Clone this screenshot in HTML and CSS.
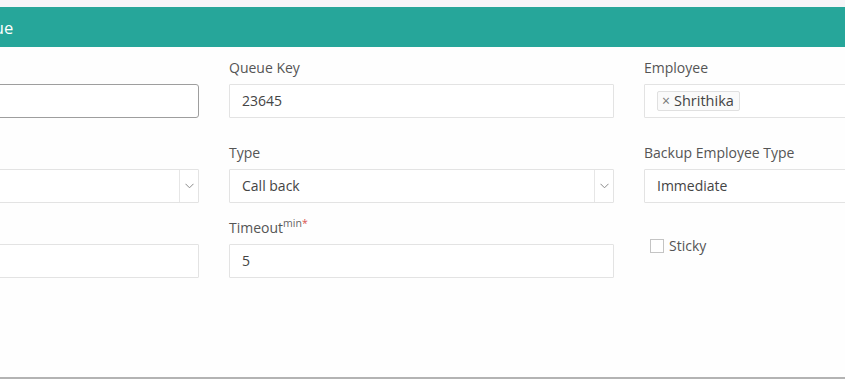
FILE: index.html
```html
<!DOCTYPE html>
<html lang="en">
<head>
    <meta charset="UTF-8">
    <meta name="viewport" content="width=device-width, initial-scale=1.0">
    <title>Edit Queue</title>
    <link rel="stylesheet" href="styles.css">
</head>
<body>
    <div class="modal">
        <div class="modal-header">
            <h2 class="modal-title">Edit Queue</h2>
        </div>

        <div class="modal-body">
            <div class="form-grid">
                <!-- row 1 -->
                <div class="field field-first">
                    <label>Queue Name</label>
                    <div class="input input-active"></div>
                </div>
                <div class="field field-first">
                    <label>Queue Key</label>
                    <div class="input">23645</div>
                </div>
                <div class="field field-first">
                    <label>Employee</label>
                    <div class="input input-tags">
                        <span class="tag"><span class="tag-x">&times;</span>Shrithika</span>
                    </div>
                </div>

                <!-- row 2 -->
                <div class="field">
                    <label>Queue Group</label>
                    <div class="input select">
                        <span class="select-value"></span>
                        <span class="select-arrow">
                            <svg width="9" height="6" viewBox="0 0 9 6"><polyline points="0.5,0.8 4.5,4.8 8.5,0.8" fill="none" stroke="#8a8a8a" stroke-width="1"/></svg>
                        </span>
                    </div>
                </div>
                <div class="field">
                    <label>Type</label>
                    <div class="input select">
                        <span class="select-value">Call back</span>
                        <span class="select-arrow">
                            <svg width="9" height="6" viewBox="0 0 9 6"><polyline points="0.5,0.8 4.5,4.8 8.5,0.8" fill="none" stroke="#8a8a8a" stroke-width="1"/></svg>
                        </span>
                    </div>
                </div>
                <div class="field">
                    <label>Backup Employee Type</label>
                    <div class="input">Immediate</div>
                </div>

                <!-- row 3 -->
                <div class="field">
                    <label>Priority</label>
                    <div class="input"></div>
                </div>
                <div class="field">
                    <label>Timeout<sup class="unit">min<span class="req">*</span></sup></label>
                    <div class="input">5</div>
                </div>
                <div class="field field-check">
                    <label class="check"><span class="checkbox"></span>Sticky</label>
                </div>
            </div>
        </div>
    </div>
</body>
</html>
```

FILE: styles.css
```css
html, body {
    margin: 0;
    padding: 0;
}

body {
    font-family: 'Open Sans', 'Noto Sans', sans-serif;
    background: #f5f5f8;
    color: #444;
    overflow: hidden;
    padding-top: 7px;
}

.modal {
    background: #fefefe;
    height: 372px;
    border-bottom: 2px solid #b3b3b3;
    box-sizing: border-box;
}

.modal-header {
    background: #26a69a;
    height: 40px;
    display: flex;
    align-items: center;
}

.modal-title {
    margin: 0 0 0 -72px;
    font-size: 16.5px;
    font-weight: 400;
    color: #fff;
}

.modal-body {
    margin-left: -186px;
    padding-top: 11px;
}

.form-grid {
    display: grid;
    grid-template-columns: repeat(3, 385px);
    column-gap: 30px;
    row-gap: 15px;
}

.field label {
    display: block;
    font-size: 14px;
    line-height: 20px;
    color: #555;
    margin-bottom: 6px;
}

.field-first {
    margin-bottom: 10px;
}

.unit {
    font-size: 10.5px;
    line-height: 0;
    color: #666;
}

.req {
    color: #d9534f;
}

.input {
    height: 34px;
    box-sizing: border-box;
    border: 1px solid #e3e3e3;
    border-radius: 1px;
    background: #fff;
    padding: 0 12px;
    font-size: 14px;
    line-height: 32px;
    color: #444;
    display: flex;
    align-items: center;
}

.input-active {
    border-color: #9e9e9e;
    border-radius: 3px;
}

.tag {
    display: inline-flex;
    align-items: center;
    height: 20px;
    box-sizing: border-box;
    border: 1px solid #e0e0e0;
    border-radius: 2px;
    background: #fafafa;
    padding: 0 5px 0 4px;
    font-size: 14.5px;
    line-height: 18px;
    color: #444;
}

.tag-x {
    color: #777;
    margin-right: 4px;
    font-size: 14px;
}

.select {
    padding-right: 0;
}

.select-value {
    flex: 1;
}

.select-arrow {
    width: 18px;
    height: 100%;
    border-left: 1px solid #e6e6e6;
    display: flex;
    align-items: center;
    justify-content: center;
}

.field-check {
    padding-top: 18px;
}

.field-check .check {
    display: flex;
    align-items: center;
    color: #555;
    margin: 0 0 0 6px;
}

.checkbox {
    width: 12px;
    height: 12px;
    border: 1px solid #c4c4c4;
    background: #fff;
    margin-right: 5px;
}
```
